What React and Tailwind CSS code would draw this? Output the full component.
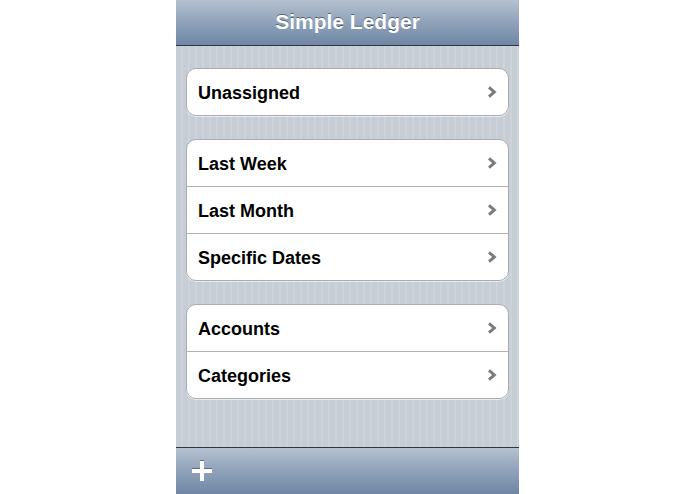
import React from "react";

const groups = [
  ["Unassigned"],
  ["Last Week", "Last Month", "Specific Dates"],
  ["Accounts", "Categories"],
];

function Chevron() {
  return (
    <svg width="10" height="12" viewBox="0 0 10 12" className="shrink-0">
      <path d="M2 1.3 L7.3 6 L2 10.7" fill="none" stroke="#7a7a7a" strokeWidth="3" strokeLinecap="butt" strokeLinejoin="miter" />
    </svg>
  );
}

export default function App() {
  return (
    <div className="w-[695px] h-[494px] bg-white flex justify-center overflow-hidden" style={{ fontFamily: '"Liberation Sans", Arial, Helvetica, sans-serif' }}>
      <div className="w-[343px] h-[494px] flex flex-col">
        <div className="h-[46px] shrink-0 border-b border-[#2d3642] bg-[linear-gradient(to_bottom,#b5c1d0_0%,#8fa2b9_50%,#6f86a4_100%)] flex items-center justify-center">
          <span className="text-white font-bold text-[21px] leading-none -mt-[2px] [text-shadow:0_-1px_0_rgba(0,0,0,0.45)]">Simple Ledger</span>
        </div>
        <div className="flex-1 bg-[repeating-linear-gradient(90deg,#c6cdd5_0px,#c6cdd5_5px,#ccd3d9_5px,#ccd3d9_7px)] px-[10px] pt-[22px] flex flex-col gap-[23px]">
          {groups.map((g, gi) => (
            <div key={gi} className="bg-white border border-[#a9acb0] rounded-[10px] shadow-[0_1px_0_rgba(255,255,255,0.6)] overflow-hidden">
              {g.map((item, i) => (
                <div key={item} className={`h-[46px] flex items-center justify-between pl-[11px] pr-[11px] ${i > 0 ? "border-t border-[#b2b2b2] h-[47px]" : ""}`}>
                  <span className="text-black font-bold text-[18px] leading-none pt-[2px]">{item}</span>
                  <Chevron />
                </div>
              ))}
            </div>
          ))}
        </div>
        <div className="h-[47px] shrink-0 border-t border-[#2d3642] bg-[linear-gradient(to_bottom,#b5c1d0_0%,#8fa2b9_50%,#6f86a4_100%)] flex items-center pl-[16px]">
          <svg width="20" height="20" viewBox="0 0 20 20" className="[filter:drop-shadow(0_-1px_0_rgba(0,0,0,0.35))]">
            <rect x="8" y="0" width="4" height="20" fill="white" />
            <rect x="0" y="8" width="20" height="4" fill="white" />
          </svg>
        </div>
      </div>
    </div>
  );
}
